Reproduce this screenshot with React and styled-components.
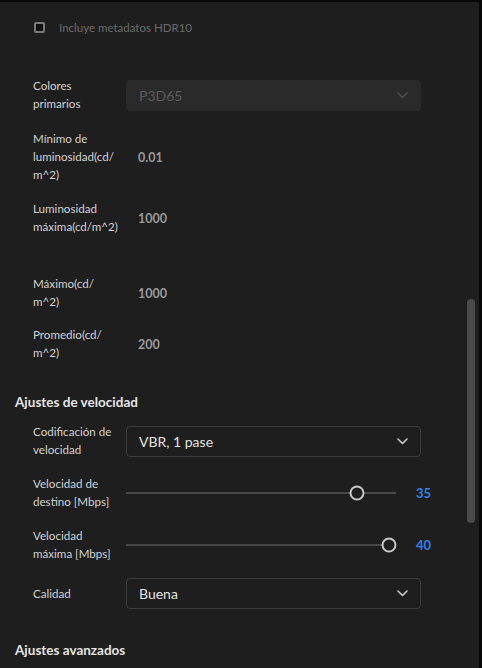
import React from 'react';
import styled, { createGlobalStyle } from 'styled-components';

const GlobalStyle = createGlobalStyle`
  html, body {
    margin: 0;
    padding: 0;
    background: #1e1e1e;
  }
  body {
    font-family: Lato, "Open Sans", "Liberation Sans", sans-serif;
  }
`;

const Frame = styled.div`
  position: relative;
  width: 482px;
  height: 668px;
  box-sizing: border-box;
  background: #1e1e1e;
  border-top: 2px solid #080808;
  border-right: 3px solid #080808;
  overflow: hidden;
`;

const Content = styled.div`
  display: flex;
  flex-direction: column;
  padding: 17px 0 0 0;
`;

const CheckRow = styled.label`
  display: flex;
  align-items: center;
  gap: 14px;
  height: 16px;
  padding-left: 34px;
  font-size: 11.5px;
  color: #6b6b6b;
`;

const Box = styled.span`
  width: 7px;
  height: 7px;
  border: 2px solid #7a7a7a;
  border-radius: 2px;
  background: #111;
`;

const Row = styled.div`
  display: grid;
  grid-template-columns: 93px 295px auto;
  align-items: center;
  padding-left: 33px;
  margin-top: ${p => p.gap}px;
  min-height: ${p => p.h || 36}px;
`;

const Label = styled.div`
  font-size: 11.6px;
  line-height: 18px;
  color: #d2d2d2;
`;

const Value = styled.div`
  padding-left: 12px;
  font-size: 12.5px;
  font-weight: 700;
  color: #9a9a9a;
`;

const Select = styled.div`
  display: flex;
  align-items: center;
  justify-content: space-between;
  height: 31px;
  box-sizing: border-box;
  padding: 0 12px 0 12px;
  border-radius: 4px;
  border: 1px solid ${p => (p.disabled ? '#2a2a2a' : '#3c3c3c')};
  background: ${p => (p.disabled ? '#2a2a2a' : '#1e1e1e')};
  font-size: 14px;
  color: ${p => (p.disabled ? '#5c5c5c' : '#e2e2e2')};
`;

const Heading = styled.div`
  margin-top: ${p => p.gap}px;
  padding-left: 15px;
  height: 18px;
  line-height: 18px;
  font-size: 13.5px;
  font-weight: 700;
  color: #e4e4e4;
`;

const SliderWrap = styled.div`
  grid-column: 2 / 4;
  display: flex;
  align-items: center;
  gap: 20px;
`;

const Track = styled.div`
  position: relative;
  width: 270px;
  height: 2px;
  background: #484848;
`;

const Thumb = styled.span`
  position: absolute;
  top: 50%;
  width: 15px;
  height: 15px;
  box-sizing: border-box;
  border: 2px solid #c8c8c8;
  border-radius: 50%;
  background: #1e1e1e;
  transform: translate(-50%, -50%);
`;

const SliderValue = styled.span`
  font-size: 13px;
  font-weight: 700;
  color: #2f82ec;
`;

const Scrollbar = styled.div`
  position: absolute;
  right: 4px;
  top: 297px;
  width: 8px;
  height: 224px;
  border-radius: 4px;
  background: #4a4a4a;
`;

const Chevron = ({ color }) => (
  <svg width="11" height="7" viewBox="0 0 11 7" fill="none">
    <path d="M1 1l4.5 4.5L10 1" stroke={color} strokeWidth="1.6" strokeLinecap="round" strokeLinejoin="round" />
  </svg>
);

const Slider = ({ value, max }) => {
  const x = 7 + (value / max) * 256;
  return (
    <SliderWrap>
      <Track>
        <Thumb style={{ left: x }} />
      </Track>
      <SliderValue>{value}</SliderValue>
    </SliderWrap>
  );
};

export default function App() {
  return (
    <Frame>
      <GlobalStyle />
      <Content>
        <CheckRow>
          <Box />
          Incluye metadatos HDR10
        </CheckRow>

        <Row gap={42}>
          <Label>Colores<br />primarios</Label>
          <Select disabled>
            P3D65
            <Chevron color="#4e4e4e" />
          </Select>
        </Row>

        <Row gap={17} h={54}>
          <Label>Mínimo de<br />luminosidad(cd/<br />m^2)</Label>
          <Value>0.01</Value>
        </Row>

        <Row gap={16}>
          <Label>Luminosidad<br />máxima(cd/m^2)</Label>
          <Value>1000</Value>
        </Row>

        <Row gap={39}>
          <Label>Máximo(cd/<br />m^2)</Label>
          <Value>1000</Value>
        </Row>

        <Row gap={15}>
          <Label>Promedio(cd/<br />m^2)</Label>
          <Value>200</Value>
        </Row>

        <Heading gap={31}>Ajustes de velocidad</Heading>

        <Row gap={12}>
          <Label>Codificación de<br />velocidad</Label>
          <Select>
            VBR, 1 pase
            <Chevron color="#c8c8c8" />
          </Select>
        </Row>

        <Row gap={16}>
          <Label>Velocidad de<br />destino [Mbps]</Label>
          <Slider value={35} max={40} />
        </Row>

        <Row gap={16}>
          <Label>Velocidad<br />máxima [Mbps]</Label>
          <Slider value={40} max={40} />
        </Row>

        <Row gap={15} h={31}>
          <Label>Calidad</Label>
          <Select>
            Buena
            <Chevron color="#c8c8c8" />
          </Select>
        </Row>

        <Heading gap={32}>Ajustes avanzados</Heading>
      </Content>
      <Scrollbar />
    </Frame>
  );
}
